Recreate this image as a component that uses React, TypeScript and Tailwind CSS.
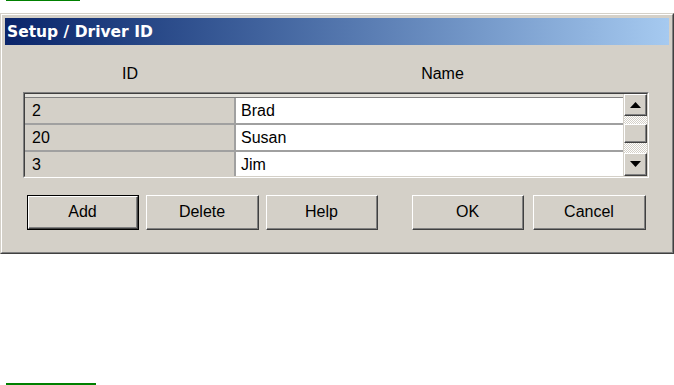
import React from "react";

const rows = [
  { id: "2", name: "Brad" },
  { id: "20", name: "Susan" },
  { id: "3", name: "Jim" },
];

function Raised({ className = "", children }: { className?: string; children?: React.ReactNode }) {
  return (
    <div className={`border border-t-white border-l-white border-b-[#404040] border-r-[#404040] bg-[#d4d0c8] ${className}`}>
      <div className="flex h-full w-full items-center justify-center border-b border-r border-b-[#808080] border-r-[#808080]">
        {children}
      </div>
    </div>
  );
}

function Arrow({ down }: { down?: boolean }) {
  return (
    <svg width="11" height="6" viewBox="0 0 11 6">
      {down ? <path d="M0 0h11L5.5 6z" fill="#000" /> : <path d="M0 6h11L5.5 0z" fill="#000" />}
    </svg>
  );
}

function Button({ label, width, isDefault }: { label: string; width: string; isDefault?: boolean }) {
  if (isDefault) {
    return (
      <div className={`h-[35px] border border-black ${width}`}>
        <Raised className="h-full w-full">{label}</Raised>
      </div>
    );
  }
  return <Raised className={`h-[35px] ${width}`}>{label}</Raised>;
}

export default function App() {
  return (
    <div className="h-[385px] w-[674px] bg-white font-['Liberation_Sans',Arial,sans-serif] text-[16px] leading-[18px] text-black">
      <div className="ml-[6px] h-px w-[74px] bg-[#008000]" />

      {/* Dialog */}
      <div className="mt-[12px] h-[241px] border border-t-[#d4d0c8] border-l-[#d4d0c8] border-b-[#404040] border-r-[#404040]">
        <div className="h-full border border-t-white border-l-white border-b-[#808080] border-r-[#808080] bg-[#d4d0c8] p-[3px]">
          {/* Title bar */}
          <div className="flex h-[27px] items-center bg-gradient-to-r from-[#0a246a] to-[#a6caf0] pl-[2px] font-['DejaVu_Sans',sans-serif] text-[15.5px] font-bold text-white">
            Setup / Driver ID
          </div>

          {/* Column headers */}
          <div className="ml-[18px] mt-[20px] flex h-[18px]">
            <div className="w-[214px] text-center">ID</div>
            <div className="w-[411px] text-center">Name</div>
          </div>

          {/* Grid */}
          <div className="ml-[18px] mt-[9px] h-[86px] w-[626px] border border-t-[#808080] border-l-[#808080] border-b-white border-r-white">
            <div className="flex h-full border border-t-[#404040] border-l-[#404040] border-b-[#d4d0c8] border-r-[#d4d0c8]">
              <div className="flex-1 overflow-hidden">
                <div className="h-[4px] border-b border-b-[#808080] bg-[#e4e2dc]" />
                {rows.map((r) => (
                  <div key={r.id} className="flex h-[27px] border-b-2 border-b-[#a0a0a0]">
                    <div className="flex w-[211px] items-center border-r-2 border-r-[#a0a0a0] pl-[7px]">{r.id}</div>
                    <div className="flex flex-1 items-center bg-white pl-[5px]">{r.name}</div>
                  </div>
                ))}
              </div>
              <div className="ml-px flex w-[23px] flex-col bg-[repeating-conic-gradient(#ffffff_0%_25%,#d4d0c8_0%_50%)] bg-[length:2px_2px]">
                <Raised className="h-[22px]">
                  <Arrow />
                </Raised>
                <div className="h-[8px]" />
                <Raised className="h-[19px]" />
                <div className="flex-1" />
                <Raised className="h-[23px]">
                  <Arrow down />
                </Raised>
              </div>
            </div>
          </div>

          {/* Buttons */}
          <div className="ml-[22px] mt-[17px] flex">
            <Button label="Add" width="w-[112px]" isDefault />
            <div className="ml-[7px]">
              <Button label="Delete" width="w-[113px]" />
            </div>
            <div className="ml-[7px]">
              <Button label="Help" width="w-[112px]" />
            </div>
            <div className="ml-[34px]">
              <Button label="OK" width="w-[112px]" />
            </div>
            <div className="ml-[9px]">
              <Button label="Cancel" width="w-[113px]" />
            </div>
          </div>
        </div>
      </div>

      <div className="ml-[6px] mt-[129px] h-[2px] w-[90px] bg-[#008000]" />
    </div>
  );
}
